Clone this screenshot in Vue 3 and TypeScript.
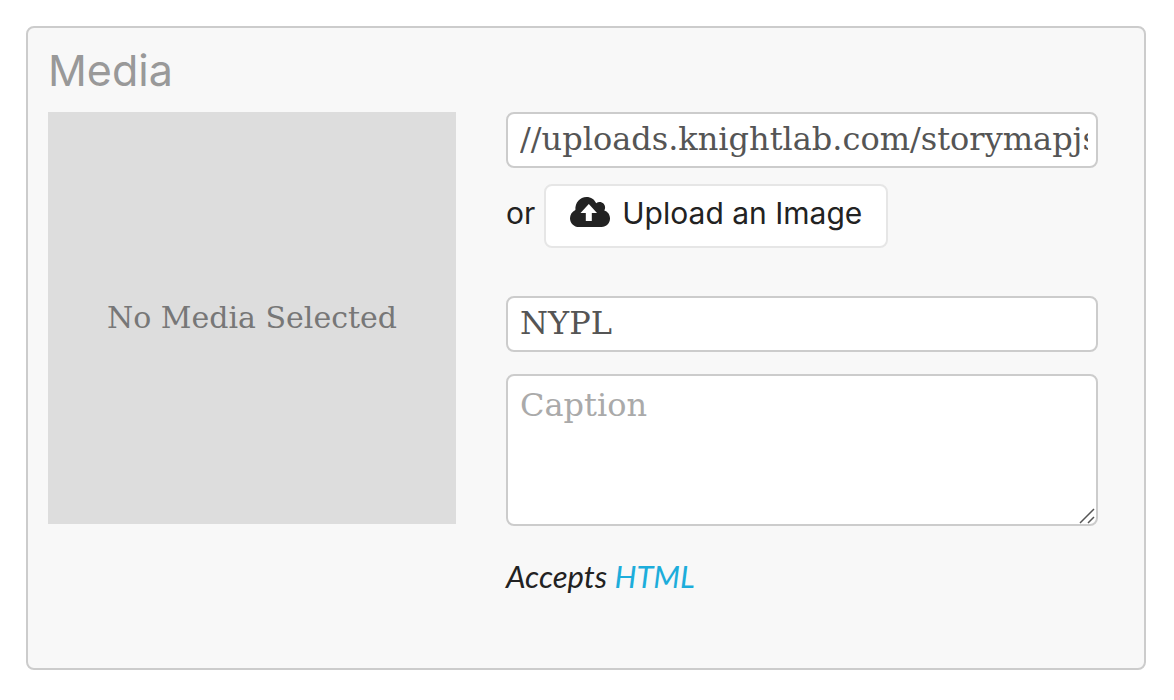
<script setup lang="ts">
import { ref } from 'vue'

const mediaUrl = ref('//uploads.knightlab.com/storymapjs')
const credit = ref('NYPL')
const caption = ref('')
</script>

<template>
  <section class="panel" aria-labelledby="media-title">
    <h2 id="media-title" class="title">Media</h2>
    <div class="columns">
      <div class="preview">No Media Selected</div>
      <form class="fields" @submit.prevent>
        <input v-model="mediaUrl" class="field" type="text" aria-label="Media URL" />
        <div class="upload-row">
          <span class="or">or</span>
          <button class="upload" type="button">
            <svg class="cloud" viewBox="0 0 40 30" aria-hidden="true">
              <path
                fill="currentColor"
                fill-rule="evenodd"
                d="M9 30C4 30 0 26.200 0 21.200C0 17.500 2.200 14.400 5.400 12.900C5 5.500 10 0 16.500 0C21 0 24.500 2.400 26.200 6.300C27.200 5.500 28.300 5.100 29.600 5.100C32.700 5.100 35.100 7.500 35.100 10.600C35.100 11.700 34.800 12.600 34.300 13.500C37.600 14.400 40 17.500 40 21.600C40 26.300 36.400 30 31.500 30ZM18.800 7L10.500 16H15.800V24H21.800V16H27Z"
              />
            </svg>
            <span>Upload an Image</span>
          </button>
        </div>
        <input v-model="credit" class="field" type="text" aria-label="Credit" placeholder="Credit" />
        <div class="caption-box">
          <textarea v-model="caption" class="field caption" aria-label="Caption" placeholder="Caption"></textarea>
          <svg class="grip" viewBox="0 0 16 16" aria-hidden="true">
            <path d="M1 15L15 1M9 15L15 9" fill="none" stroke="#555" stroke-width="1.500" />
          </svg>
        </div>
        <p class="hint">Accepts <a href="#html">HTML</a></p>
      </form>
    </div>
  </section>
</template>

<style>
body {
  background: #fff;
}
</style>

<style scoped>
.panel {
  box-sizing: border-box;
  margin: 26px 28px 0 26px;
  padding: 20px 46px 72px 20px;
  border: 2px solid #ccc;
  border-radius: 8px;
  background: #f8f8f8;
  color: #222;
  font: 30px/40px Inter, "Open Sans", sans-serif;
}
.title {
  margin: 0 0 20px;
  color: #999;
  font-size: 43px;
  font-weight: 400;
  line-height: 44px;
}
.columns {
  display: grid;
  grid-template-columns: 408fr 592fr;
  gap: 50px;
  align-items: start;
}
.preview {
  display: flex;
  align-items: center;
  justify-content: center;
  min-height: 412px;
  background: #ddd;
  color: #777;
  font: 30px/40px "DejaVu Serif", serif;
}
.fields {
  min-width: 0;
}
.field {
  display: block;
  box-sizing: border-box;
  width: 100%;
  height: 56px;
  margin: 0;
  padding: 5px 8px 7px 12px;
  border: 2px solid #ccc;
  border-radius: 8px;
  outline: none;
  background: #fff;
  color: #555;
  font: 32px/40px "DejaVu Serif", serif;
}
.field::placeholder {
  color: #aaa;
  opacity: 1;
}
.upload-row {
  display: flex;
  align-items: center;
  gap: 9px;
  margin: 16px 0 48px;
}
.or {
  padding-bottom: 6px;
}
.upload {
  display: flex;
  align-items: center;
  gap: 12px;
  height: 64px;
  padding: 0 24px 6px;
  border: 2px solid #e6e6e6;
  border-radius: 8px;
  background: #fff;
  color: #222;
  font: inherit;
}
.cloud {
  width: 40px;
  height: 30px;
  margin-bottom: 2px;
}
.caption-box {
  position: relative;
  margin-top: 22px;
}
.caption {
  height: 152px;
  padding-top: 9px;
  resize: none;
}
.grip {
  position: absolute;
  right: 3px;
  bottom: 2px;
  width: 16px;
  height: 16px;
  pointer-events: none;
}
.hint {
  margin: 30px 0 0;
  font-family: Lato, sans-serif;
  font-size: 31px;
  font-style: italic;
}
.hint a {
  color: #1daddb;
  text-decoration: none;
}
</style>
